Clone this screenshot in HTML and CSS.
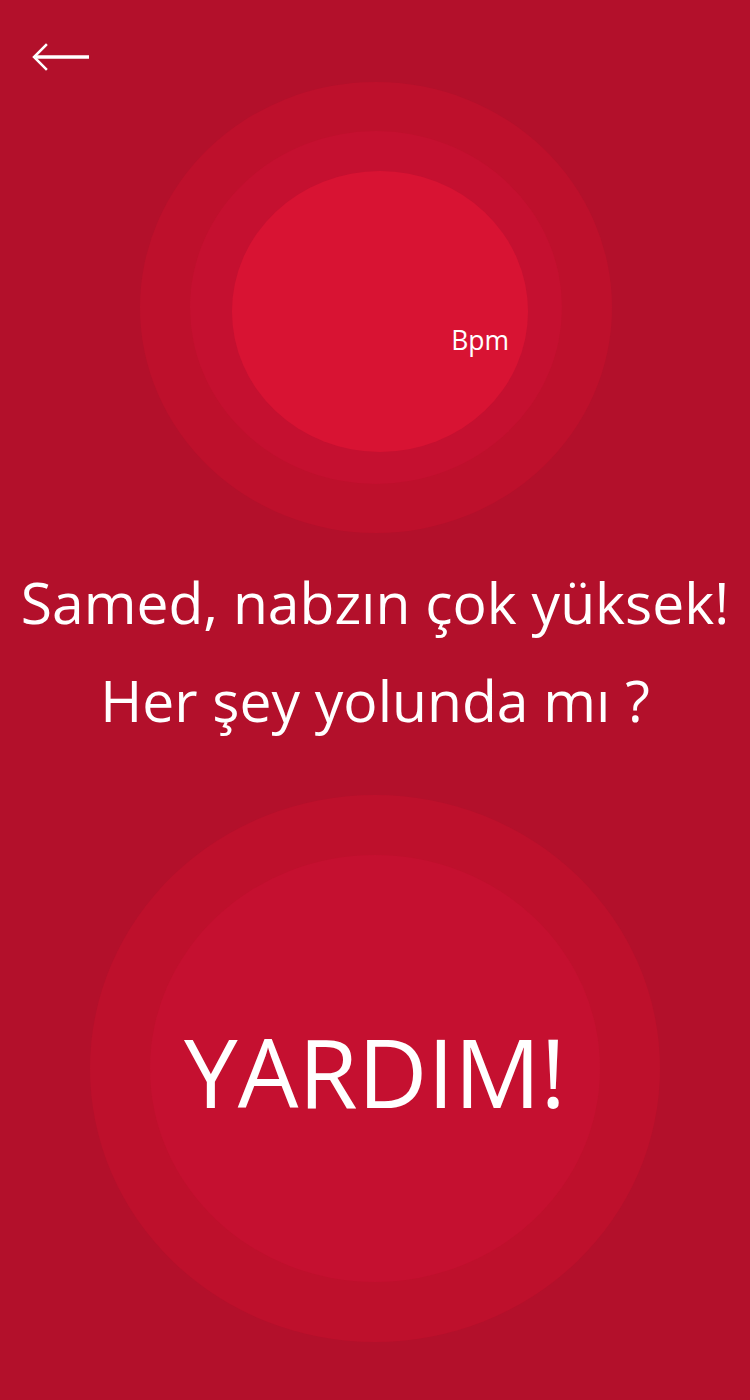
FILE: index.html
```html
<!DOCTYPE html>
<html lang="tr">
<head>
<meta charset="utf-8">
<title>Nabız</title>
<link rel="stylesheet" href="styles.css">
</head>
<body>
<div class="page">
  <header class="topbar">
    <svg class="back" width="60" height="30" viewBox="0 0 60 30" aria-label="Geri">
      <path d="M16 3 L4 15 L16 27" fill="none" stroke="#fff" stroke-width="2.5" stroke-linecap="square"/>
      <path d="M6 15 H59" fill="none" stroke="#fff" stroke-width="3.5"/>
    </svg>
  </header>

  <section class="pulse">
    <div class="ring ring-outer">
      <div class="ring ring-mid">
        <div class="ring ring-inner">
          <span class="bpm">Bpm</span>
        </div>
      </div>
    </div>
  </section>

  <section class="message">
    <p class="line">Samed, nabzın çok yüksek!</p>
    <p class="line">Her şey yolunda mı ?</p>
  </section>

  <section class="help">
    <div class="ring help-outer">
      <button class="ring help-inner" type="button">YARDIM!</button>
    </div>
  </section>
</div>
</body>
</html>
```
FILE: styles.css
```css
* { box-sizing: border-box; }
html, body { margin: 0; padding: 0; }
body {
  background: #b3102b;
  font-family: "Open Sans", "Noto Sans", sans-serif;
  color: #fff;
}
.page {
  width: 750px;
  height: 1400px;
  background: #b3102b;
  overflow: hidden;
}
.topbar {
  height: 82px;
  padding: 42px 0 0 30px;
}
.back { display: block; }

.ring {
  border-radius: 50%;
  display: flex;
  align-items: center;
  justify-content: center;
}
.pulse {
  display: flex;
  justify-content: center;
  padding-left: 2px;
}
.ring-outer {
  width: 472px;
  height: 451px;
  background: #be102c;
}
.ring-mid {
  width: 372px;
  height: 353px;
  background: #c51030;
}
.ring-inner {
  width: 296px;
  height: 281px;
  margin: 8px 0 0 8px;
  background: #d81333;
  justify-content: flex-end;
  padding: 57px 19px 0 0;
}
.bpm {
  font-size: 26.5px;
  line-height: 1;
}

.message {
  margin-top: 20px;
  text-align: center;
}
.line {
  margin: 0;
  font-size: 57px;
  line-height: 98px;
  white-space: nowrap;
}

.help {
  margin-top: 46px;
  display: flex;
  justify-content: center;
}
.help-outer {
  width: 570px;
  height: 547px;
  background: #be102c;
}
.help-inner {
  width: 450px;
  height: 427px;
  background: #c51030;
  border: 0;
  color: #fff;
  font-family: inherit;
  font-size: 96px;
  padding: 4px 0 0;
  cursor: pointer;
}
```
